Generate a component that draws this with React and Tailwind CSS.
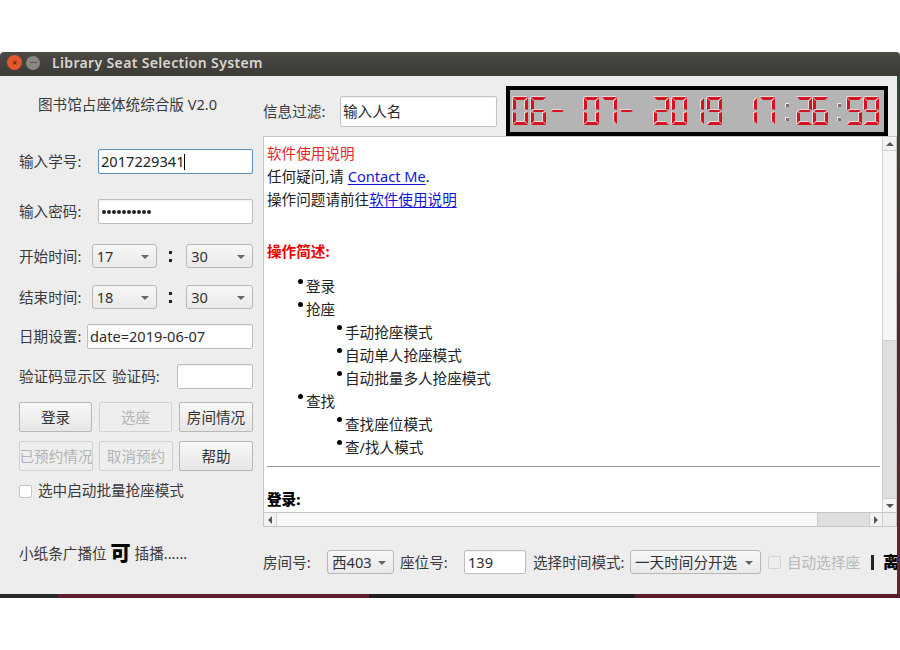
import React from "react";

const FONT = { fontFamily: '"Noto Sans", "Noto Sans CJK SC", sans-serif' };

const SEG = {
  "0": "abcdef", "1": "bc", "2": "abged", "5": "afgcd", "6": "afgcde", "7": "abc", "9": "abcdfg", "-": "g",
};

function Digit({ ch, x }) {
  const w = 15, h = 28, t = 3, top = 97;
  const on = SEG[ch] || "";
  const s = {
    a: `${x},${top} ${x + w},${top} ${x + w - t},${top + t} ${x + t},${top + t}`,
    b: `${x + w},${top + 1} ${x + w},${top + h / 2 - 1} ${x + w - t},${top + h / 2 - 2} ${x + w - t},${top + t + 1}`,
    c: `${x + w},${top + h / 2 + 1} ${x + w},${top + h - 1} ${x + w - t},${top + h - t - 1} ${x + w - t},${top + h / 2 + 2}`,
    d: `${x},${top + h} ${x + w},${top + h} ${x + w - t},${top + h - t} ${x + t},${top + h - t}`,
    e: `${x},${top + h / 2 + 1} ${x},${top + h - 1} ${x + t},${top + h - t - 1} ${x + t},${top + h / 2 + 2}`,
    f: `${x},${top + 1} ${x},${top + h / 2 - 1} ${x + t},${top + h / 2 - 2} ${x + t},${top + t + 1}`,
    g: `${x + 1},${top + h / 2} ${x + t},${top + h / 2 - 1} ${x + w - t},${top + h / 2 - 1} ${x + w - 1},${top + h / 2} ${x + w - t},${top + h / 2 + 1} ${x + t},${top + h / 2 + 1}`,
  };
  return (
    <g>
      {on.split("").map((k) => (
        <g key={k}>
          <polygon points={s[k]} fill="#f3e6e6" transform="translate(-0.8,-0.8)" />
          <polygon points={s[k]} fill="#d5121f" />
        </g>
      ))}
    </g>
  );
}

const LCD_CHARS = [
  ["0", 513], ["6", 531], ["-", 550], ["0", 584], ["7", 602], ["-", 619],
  ["2", 654], ["0", 672], ["1", 689], ["9", 707], ["1", 742], ["7", 760],
  ["2", 797], ["6", 813], ["5", 847], ["9", 864],
];

function Lcd() {
  return (
    <div className="w-[382px] h-[50px] border-[4px] border-black bg-[#b4b4b4] shrink-0">
      <svg width="374" height="42" viewBox="510 90 374 42" aria-label="06-07-2019 17:26:59">
        {LCD_CHARS.map(([c, x], i) => <Digit key={i} ch={c} x={x} />)}
        {[785, 837].map((x) => (
          <g key={x}>
            <rect x={x} y="103" width="4" height="4" fill="#f0e8e8" />
            <rect x={x} y="117" width="4" height="4" fill="#f0e8e8" />
            <rect x={x + 1} y="104" width="3" height="3" fill="#8a6a6a" />
            <rect x={x + 1} y="118" width="3" height="3" fill="#8a6a6a" />
          </g>
        ))}
      </svg>
    </div>
  );
}

function Input({ className = "", children }) {
  return (
    <div className={`bg-white border border-[#bdbdbd] rounded-[2px] flex items-center pl-[2px] text-[14.6px] text-[#2b2b2b] shadow-[inset_0_1px_1px_rgba(0,0,0,0.06)] ${className}`}>
      {children}
    </div>
  );
}

function Combo({ value, className = "" }) {
  return (
    <div className={`h-[24px] border border-[#b8b8b8] rounded-[3px] bg-gradient-to-b from-[#f7f7f7] to-[#e9e9e9] flex items-center justify-between pl-[4px] pr-[7px] pt-[1px] text-[14.6px] text-[#333] whitespace-nowrap ${className}`}>
      <span>{value}</span>
      <span className="w-0 h-0 border-x-[4px] border-x-transparent border-t-[4px] border-t-[#666]" />
    </div>
  );
}

function Btn({ children, disabled, className = "" }) {
  return (
    <div className={`h-[30px] border rounded-[2px] flex items-center justify-center overflow-hidden whitespace-nowrap pt-[1px] text-[14.6px] ${disabled ? "border-[#d2d2d2] text-[#b4b4b4] bg-[#eeeeee]" : "border-[#b8b8b8] text-[#333] bg-gradient-to-b from-[#f8f8f8] to-[#e6e6e6]"} ${className}`}>
      {children}
    </div>
  );
}

function Colon() {
  return <span className="w-[6px] flex flex-col gap-[5px] items-center"><i className="w-[3px] h-[3px] bg-[#222] block" /><i className="w-[3px] h-[3px] bg-[#222] block" /></span>;
}

function TimeRow({ label, hour, className = "" }) {
  return (
    <div className={`flex items-center h-[24px] ${className}`}>
      <span className="w-[73px] pt-[1px]">{label}</span>
      <Combo value={hour} className="w-[66px]" />
      <span className="w-[28px] flex justify-center -ml-[1px] mr-[2px]"><Colon /></span>
      <Combo value="30" className="w-[67px]" />
    </div>
  );
}

function Li({ children, nested }) {
  return (
    <div className={`h-[23px] flex items-center relative ${nested ? "pl-[78px]" : "pl-[39px]"}`}>
      <span className="absolute w-[5px] h-[5px] rounded-full bg-black top-[4px]" style={{ left: nested ? 70 : 31 }} />
      {children}
    </div>
  );
}

function Arrow({ dir }) {
  const c = {
    up: "border-x-[4px] border-x-transparent border-b-[4px] border-b-[#555]",
    down: "border-x-[4px] border-x-transparent border-t-[4px] border-t-[#555]",
    left: "border-y-[4px] border-y-transparent border-r-[4px] border-r-[#555]",
    right: "border-y-[4px] border-y-transparent border-l-[4px] border-l-[#555]",
  }[dir];
  return <span className={`w-0 h-0 ${c}`} />;
}

export default function App() {
  return (
    <div className="w-[900px] h-[650px] bg-white overflow-hidden flex flex-col pt-[52px]" style={FONT}>
      <div className="w-[900px] h-[24px] bg-gradient-to-b from-[#4a4944] to-[#3b3a36] flex items-center pl-[7px] pb-[3px] shrink-0 rounded-t-[4px]">
        <span className="w-[15px] h-[15px] rounded-full bg-[#e4572b] flex items-center justify-center text-[9px] font-bold text-[#6b2510] leading-none">×</span>
        <span className="w-[14px] h-[14px] rounded-full bg-[#8a8880] ml-[4px] flex items-center justify-center">
          <i className="block w-[7px] h-[1px] bg-[#55544e]" />
        </span>
        <span className="ml-[12px] mb-[1px] text-[14px] font-semibold text-[#d8d6d0] tracking-[0.35px] whitespace-nowrap">Library Seat Selection System</span>
      </div>

      <div className="flex w-[900px] h-[518px] shrink-0">
        <div className="w-[897px] h-full bg-[#ededed] flex text-[14.6px] text-[#3a3a3a]">
          <div className="w-[263px] shrink-0 pl-[19px] pr-[10px] flex flex-col">
            <div className="h-[20px] mt-[18px] pl-[19px] whitespace-nowrap">图书馆占座体统综合版 V2.0</div>
            <div className="flex items-center h-[25px] mt-[35px]">
              <span className="w-[79px] pt-[1px]">输入学号:</span>
              <Input className="w-[155px] h-[25px] !border-[#5f8fbd] shadow-[0_0_1px_#7aa5cf] text-[#222]">
                2017229341<span className="w-px h-[16px] bg-black" />
              </Input>
            </div>
            <div className="flex items-center h-[25px] mt-[25px]">
              <span className="w-[79px] pt-[1px]">输入密码:</span>
              <Input className="w-[155px] h-[25px] text-[#222]">
                <span className="flex gap-[1px] pl-[1px]">
                  {Array.from({ length: 10 }).map((_, i) => <i key={i} className="block w-[4px] h-[4px] rounded-full bg-[#222]" />)}
                </span>
              </Input>
            </div>
            <TimeRow label="开始时间:" hour="17" className="mt-[20px]" />
            <TimeRow label="结束时间:" hour="18" className="mt-[17px]" />
            <div className="flex items-center h-[25px] mt-[15px]">
              <span className="w-[68px] pt-[1px] whitespace-nowrap">日期设置:</span>
              <Input className="w-[166px] h-[25px]">date=2019-06-07</Input>
            </div>
            <div className="flex items-center h-[25px] mt-[15px]">
              <span className="w-[93px] pt-[1px] whitespace-nowrap">验证码显示区</span>
              <span className="w-[65px] pt-[1px] whitespace-nowrap">验证码:</span>
              <Input className="w-[76px] h-[25px]" />
            </div>
            <div className="flex gap-[7px] mt-[13px]">
              <Btn className="w-[73px]">登录</Btn>
              <Btn className="w-[73px]" disabled>选座</Btn>
              <Btn className="w-[74px]">房间情况</Btn>
            </div>
            <div className="flex gap-[6px] mt-[9px]">
              <Btn className="w-[74px]" disabled>已预约情况</Btn>
              <Btn className="w-[74px]" disabled>取消预约</Btn>
              <Btn className="w-[74px]">帮助</Btn>
            </div>
            <div className="flex items-center h-[20px] mt-[10px]">
              <span className="w-[13px] h-[13px] bg-white border border-[#c4c4c4] rounded-[2px] shrink-0" />
              <span className="ml-[6px] whitespace-nowrap">选中启动批量抢座模式</span>
            </div>
            <div className="flex items-center h-[28px] mt-[39px] whitespace-nowrap">
              <span>小纸条广播位</span>
              <span className="text-[20px] font-black text-black ml-[4px] mr-[4px] leading-none">可</span>
              <span>插播......</span>
            </div>
          </div>

          <div className="flex-1 min-w-0 flex flex-col">
            <div className="flex h-[60px] shrink-0 pt-[10px]">
              <div className="w-[77px] pt-[15px] leading-[20px] whitespace-nowrap">信息过滤:</div>
              <Input className="w-[157px] h-[31px] !border-[#c2c2c2] mt-[10px]">输入人名</Input>
              <div className="ml-[9px]"><Lcd /></div>
            </div>

            <div className="w-[634px] h-[391px] border border-[#c6c6c6] bg-white flex flex-col shrink-0">
              <div className="flex flex-1 min-h-0">
                <div className="flex-1 min-w-0 pl-[3px] pt-[5px] overflow-hidden text-[14.6px] text-[#222] leading-[23px]">
                  <div className="h-[23px] text-[#e8262d]">软件使用说明</div>
                  <div className="h-[23px]">任何疑问,请 <span className="text-[#1414d6] underline underline-offset-2">Contact Me</span>.</div>
                  <div className="h-[23px]">操作问题请前往<span className="text-[#1414d6] underline underline-offset-2">软件使用说明</span></div>
                  <div className="h-[29px]" />
                  <div className="h-[23px] font-bold text-[#f00000]">操作简述:</div>
                  <div className="h-[12px]" />
                  <Li>登录</Li>
                  <Li>抢座</Li>
                  <Li nested>手动抢座模式</Li>
                  <Li nested>自动单人抢座模式</Li>
                  <Li nested>自动批量多人抢座模式</Li>
                  <Li>查找</Li>
                  <Li nested>查找座位模式</Li>
                  <Li nested>查/找人模式</Li>
                  <div className="h-px bg-[#9a9a9a] mt-[7px] mr-[2px]" />
                  <div className="h-[23px] mt-[21px] font-black text-black">登录:</div>
                </div>
                <div className="w-[14px] shrink-0 border-l border-[#d0d0d0] flex flex-col bg-[#f2f2f2]">
                  <div className="h-[14px] flex items-center justify-center border-b border-[#d0d0d0]"><Arrow dir="up" /></div>
                  <div className="h-[189px] bg-[#f6f6f6]" />
                  <div className="flex-1 bg-[#dfdfdf] border-t border-[#cfcfcf]" />
                  <div className="h-[14px] flex items-center justify-center border-t border-[#d0d0d0] bg-[#f4f4f4]"><Arrow dir="down" /></div>
                </div>
              </div>
              <div className="h-[14px] shrink-0 border-t border-[#c6c6c6] flex">
                <div className="w-[13px] flex items-center justify-center border-r border-[#d0d0d0] bg-[#f2f2f2]"><Arrow dir="left" /></div>
                <div className="flex-1 bg-[#f7f7f7]" />
                <div className="w-[52px] bg-[#dfdfdf] border-l border-[#cfcfcf]" />
                <div className="w-[13px] flex items-center justify-center border-l border-[#d0d0d0] bg-[#f2f2f2]"><Arrow dir="right" /></div>
                <div className="w-[14px] bg-[#ededed] border-l border-[#d0d0d0]" />
              </div>
            </div>

            <div className="flex items-center h-[24px] mt-[23px] whitespace-nowrap overflow-hidden">
              <span className="w-[64px] pt-[1px] shrink-0">房间号:</span>
              <Combo value="西403" className="w-[67px] shrink-0" />
              <span className="w-[64px] ml-[6px] pt-[1px] shrink-0">座位号:</span>
              <Input className="w-[62px] h-[24px] pl-[3px] pt-[1px] shrink-0">139</Input>
              <span className="ml-[7px] w-[97px] pt-[1px] shrink-0">选择时间模式:</span>
              <Combo value="一天时间分开选" className="w-[131px] shrink-0" />
              <span className="w-[13px] h-[13px] border border-[#d2d2d2] rounded-[2px] ml-[7px] shrink-0" />
              <span className="ml-[6px] pt-[1px] text-[#b9b9b9] shrink-0">自动选择座</span>
              <span className="ml-[11px] w-[3px] h-[15px] bg-[#222] shrink-0" />
              <span className="ml-[9px] text-[16px] font-black text-black shrink-0">离</span>
            </div>
          </div>
        </div>
        <div className="flex-1 bg-gradient-to-b from-[#2f4a3c] via-[#5c2433] to-[#6b2030]" />
      </div>

      <div className="flex h-[4px] w-[900px] shrink-0">
        <div className="w-[58px] bg-[#2a2a2a]" />
        <div className="w-[311px] bg-[#5f1f30]" />
        <div className="w-[266px] bg-[#1f1f1f]" />
        <div className="flex-1 bg-[#5a1c2b]" />
      </div>
    </div>
  );
}
